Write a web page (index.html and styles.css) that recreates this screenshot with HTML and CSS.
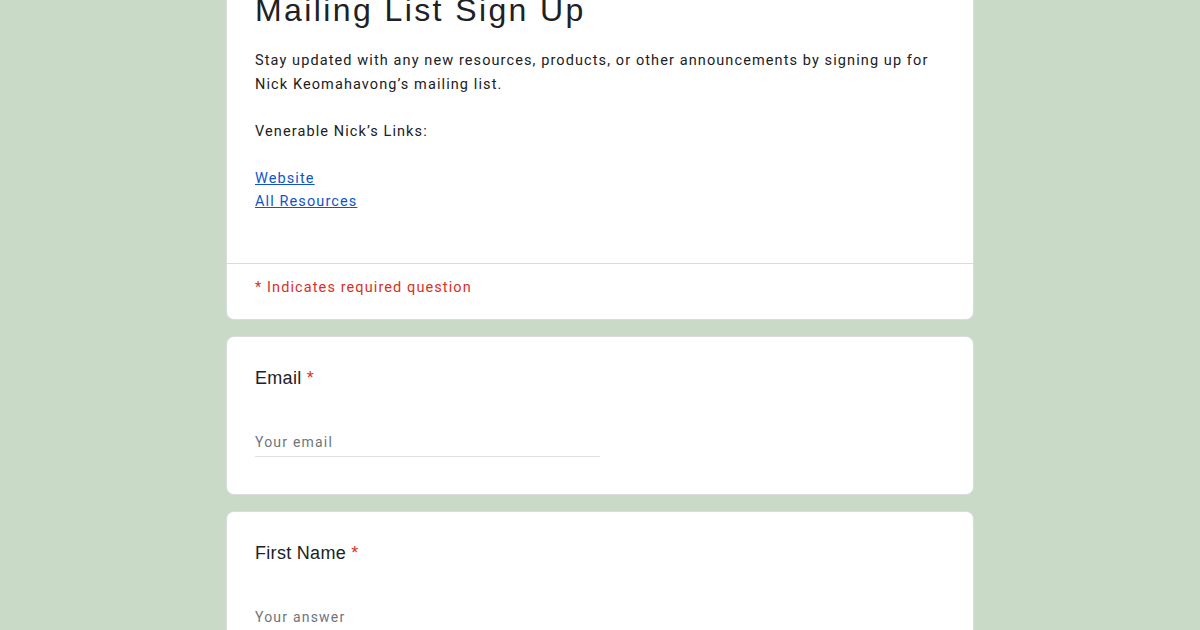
FILE: index.html
```html
<!DOCTYPE html>
<html>
<head>
<meta charset="utf-8">
<link rel="stylesheet" href="styles.css">
</head>
<body>
<main class="form">
  <section class="card header-card">
    <div class="header-body">
      <h1 class="title">Mailing List Sign Up</h1>
      <div class="desc">
        <p>Stay updated with any new resources, products, or other announcements by signing up for<br>Nick Keomahavong’s mailing list.</p>
        <p class="gap">Venerable Nick’s Links:</p>
        <p class="gap"><a href="#">Website</a><br><a href="#">All Resources</a></p>
      </div>
    </div>
    <div class="required-note">* Indicates required question</div>
  </section>

  <section class="card question">
    <div class="q-title">Email <span class="star">*</span></div>
    <div class="input">Your email</div>
  </section>

  <section class="card question">
    <div class="q-title">First Name <span class="star">*</span></div>
    <div class="input">Your answer</div>
  </section>
</main>
</body>
</html>
```

FILE: styles.css
```css
html, body {
  margin: 0;
  padding: 0;
  background: #c9dbc6;
  height: 100%;
  overflow: hidden;
}
.form {
  width: 748px;
  margin: -36px auto 0;
  display: flex;
  flex-direction: column;
  gap: 16px;
}
.card {
  background: #fff;
  border: 1px solid #dadce0;
  border-radius: 8px;
}
.header-body {
  padding: 25px 28px 49px;
  border-bottom: 1px solid #dadce0;
}
.title {
  margin: 0;
  font-family: "Liberation Sans", Arial, sans-serif;
  font-weight: 400;
  font-size: 32px;
  line-height: 40px;
  letter-spacing: 2.4px;
  color: #202124;
}
.desc {
  margin-top: 19px;
  font-family: Roboto, "Liberation Sans", sans-serif;
  font-size: 14.5px;
  line-height: 23.5px;
  letter-spacing: 1.1px;
  color: #202124;
}
.desc p { margin: 0; }
.desc p.gap { margin-top: 23.5px; }
.desc a { color: #1155cc; text-decoration: underline; }
.required-note {
  padding: 13px 28px 20px;
  font-family: Roboto, "Liberation Sans", sans-serif;
  font-size: 14.5px;
  line-height: 22px;
  letter-spacing: 1.1px;
  color: #d93025;
}
.question {
  padding: 29px 28px 37.5px;
}
.q-title {
  font-family: "Liberation Sans", Arial, sans-serif;
  font-size: 18px;
  line-height: 24px;
  letter-spacing: 0.3px;
  color: #202124;
}
.star { color: #d93025; }
.input {
  margin-top: 42px;
  width: 345px;
  padding-bottom: 4px;
  border-bottom: 1px solid #e0e0e0;
  font-family: Roboto, "Liberation Sans", sans-serif;
  font-size: 14px;
  line-height: 20px;
  letter-spacing: 1.2px;
  color: #70757a;
}
```
